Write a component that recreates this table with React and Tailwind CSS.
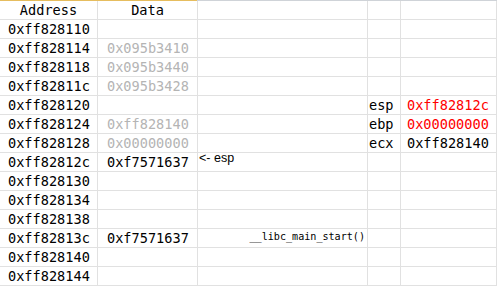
const ROWS = [
  { addr: '0xff828110' },
  { addr: '0xff828114', data: '0x095b3410', dim: true },
  { addr: '0xff828118', data: '0x095b3440', dim: true },
  { addr: '0xff82811c', data: '0x095b3428', dim: true },
  { addr: '0xff828120', reg: 'esp', val: '0xff82812c', red: true },
  { addr: '0xff828124', data: '0xff828140', dim: true, reg: 'ebp', val: '0x00000000', red: true },
  { addr: '0xff828128', data: '0x00000000', dim: true, reg: 'ecx', val: '0xff828140' },
  { addr: '0xff82812c', data: '0xf7571637', note: '<- esp' },
  { addr: '0xff828130' },
  { addr: '0xff828134' },
  { addr: '0xff828138' },
  { addr: '0xff82813c', data: '0xf7571637', call: '__libc_main_start()' },
  { addr: '0xff828140' },
  { addr: '0xff828144' },
];

const mono = "font-['DejaVu_Sans_Mono','Liberation_Mono',monospace]";

const Cell = ({ className = '', children }) => (
  <div className={`h-[19px] border-r border-b border-[#e1e1e1] flex items-end overflow-visible whitespace-nowrap ${className}`}>
    {children}
  </div>
);

export default function App() {
  return (
    <div className="w-[500px] h-[287px] bg-white overflow-hidden text-black">
      <div className="flex w-[497px] h-px">
        <div className="w-[197px] bg-[#e6bd5e]" />
        <div className="flex-1 bg-[#cfd3d8]" />
      </div>
      <div className={`grid grid-cols-[98px_100px_170px_33px_96px] w-[497px] text-[13.6px] leading-[17px] ${mono}`}>
        <Cell className="justify-center">Address</Cell>
        <Cell className="justify-center">Data</Cell>
        <Cell />
        <Cell />
        <Cell />
        {ROWS.map(r => (
          <div key={r.addr} className="contents">
            <Cell className="pl-[8px]">{r.addr}</Cell>
            <Cell className={`pl-[9px] ${r.dim ? 'text-[#b4b4b4]' : ''}`}>{r.data}</Cell>
            {r.note ? (
              <Cell className="pl-[1px] font-['Liberation_Sans',Arial,sans-serif] text-[12.5px] pb-[4px]">{r.note}</Cell>
            ) : r.call ? (
              <Cell className="justify-end pr-[2px] text-[10.1px] pb-[2px]">{r.call}</Cell>
            ) : (
              <Cell />
            )}
            <Cell className="pl-[1px]">{r.reg}</Cell>
            <Cell className={`pl-[6px] ${r.red ? 'text-[#ff0000]' : ''}`}>{r.val}</Cell>
          </div>
        ))}
      </div>
    </div>
  );
}
